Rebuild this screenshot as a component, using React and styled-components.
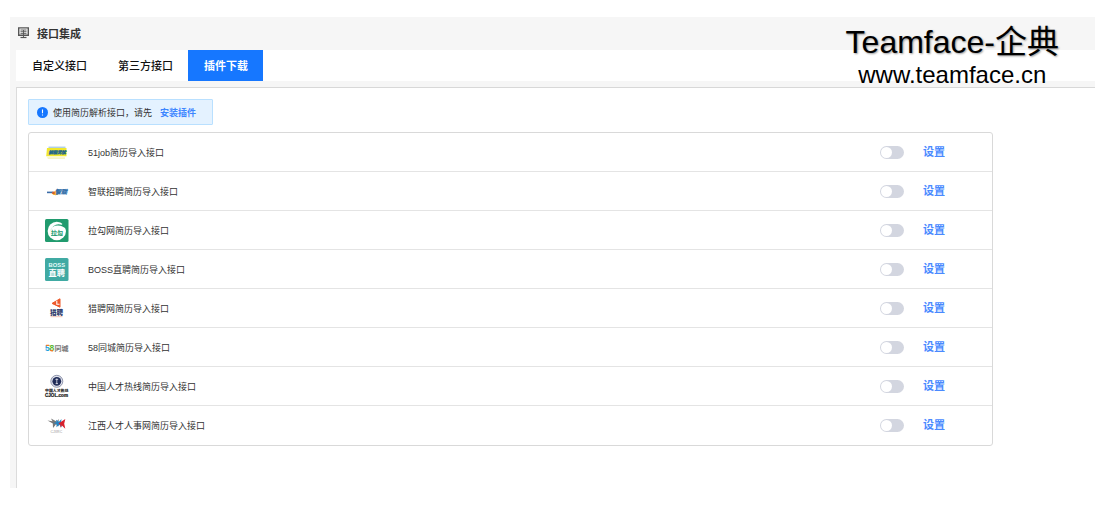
import React from 'react'
import styled, { createGlobalStyle } from 'styled-components'

const GlobalStyle = createGlobalStyle`
  * {
    box-sizing: border-box;
  }
  body {
    background-color: #fff;
    color: #333;
    font-family: "Liberation Sans", "Noto Sans CJK SC", sans-serif;
    font-size: 9px;
    margin: 0;
  }
  button {
    background: none;
    border: 0;
    cursor: pointer;
    font-family: inherit;
    padding: 0;
  }
`

const Screen = styled.div`
  display: flex;
  min-height: 100vh;
  padding: 17px 16px 23px 10px;
`

const Page = styled.main`
  background-color: #f6f6f6;
  display: flex;
  flex: 1;
  flex-direction: column;
  padding-left: 6px;
  position: relative;
`

const Header = styled.header`
  align-items: center;
  display: flex;
  gap: 8px;
  height: 33px;
  padding: 0 0 2px 2px;
  h1 {
    color: #333;
    font-size: 11px;
    font-weight: 700;
    margin: 0;
  }
`

const Tabs = styled.nav`
  background-color: #fff;
  display: flex;
  height: 31px;
  margin-bottom: 6px;
`

const Tab = styled.button`
  && {
    background-color: ${props => props.$active ? '#1677ff' : 'transparent'};
    color: ${props => props.$active ? '#fff' : '#111'};
    font-size: 11px;
    font-weight: ${props => props.$active ? 700 : 500};
    padding: 0 15px 2px 16px;
  }
`

const Panel = styled.section`
  align-items: flex-start;
  background-color: #fff;
  border-left: 1px solid #dcdcdc;
  border-top: 1px solid #d8d8d8;
  display: flex;
  flex: 1;
  flex-direction: column;
  gap: 7px;
  padding: 11px 102px 42px 11px;
`

const Notice = styled.p`
  align-items: center;
  background-color: #e4f2ff;
  border: 1px solid #b9e0ff;
  border-radius: 1px;
  display: flex;
  gap: 5px;
  height: 26px;
  margin: 0;
  padding: 0 16px 0 8px;
  a {
    color: #3d86ff;
    font-weight: 700;
    margin-left: 3px;
    text-decoration: none;
  }
`

const List = styled.ul`
  align-self: stretch;
  border: 1px solid #d9d9d9;
  border-radius: 3px;
  list-style: none;
  margin: 0;
  padding: 0;
`

const Item = styled.li`
  align-items: center;
  border-bottom: 1px solid #e4e4e4;
  display: flex;
  height: 39px;
  padding: 0 47px 0 16px;
  &:last-child {
    border-bottom-color: transparent;
  }
  label {
    flex: 1;
    margin-left: 19px;
  }
`

const Switch = styled.input`
  appearance: none;
  background-color: #d3d6e0;
  border-radius: 7px;
  cursor: pointer;
  height: 13px;
  margin: 0 19px 0 0;
  padding: 1px;
  width: 24px;
  &::before {
    background-color: #fff;
    border-radius: 50%;
    content: "";
    display: block;
    height: 11px;
    width: 11px;
  }
  &:checked {
    background-color: #1677ff;
  }
  &:checked::before {
    margin-left: 11px;
  }
`

const SetButton = styled.button`
  && {
    color: #4a8aff;
    font-size: 11px;
    font-weight: 700;
    line-height: 16px;
  }
`

const Brand = styled.div`
  color: #000;
  position: absolute;
  right: 36px;
  text-align: center;
  top: 5px;
  strong {
    display: block;
    font-size: 32px;
    font-weight: normal;
    line-height: 40px;
    text-shadow: 1px 1px 2px rgba(0, 0, 0, .4);
  }
  span {
    display: block;
    font-size: 24px;
    line-height: 26px;
  }
`

const LogoSvg = styled.svg`
  display: block;
  flex: none;
  font-family: "Liberation Sans", "Noto Sans CJK SC", sans-serif;
  height: 24px;
  overflow: visible;
  width: 24px;
`

const Logo = ({ children }) => (
  <LogoSvg viewBox="0 0 24 24" aria-hidden="true">{children}</LogoSvg>
)

const MonitorIcon = () => (
  <svg width="11" height="12" viewBox="0 0 11 12" fill="none" stroke="#555" aria-hidden="true">
    <path d="M.7.9h9.6v7.4H.7z" strokeWidth="1.4" />
    <path d="M2.5 3h6M2.5 4.7h6M2.5 6.4h6M5.5 3v7" strokeWidth=".9" />
    <path d="M2.5 10.5h6" strokeWidth="1.2" />
  </svg>
)

const InfoIcon = () => (
  <svg width="11" height="11" viewBox="0 0 11 11" aria-hidden="true">
    <circle cx="5.5" cy="5.5" r="5.5" fill="#1677ff" />
    <path d="M5.5 2.5v3.8M5.5 7.5v1.1" stroke="#fff" strokeWidth="1.1" />
  </svg>
)

const JobLogo = () => (
  <Logo>
    <path d="M3.5 7.2h17" stroke="#8fbadb" strokeWidth="1" />
    <path d="M2 8h19.5v8.3H1.2z" fill="#f0e72c" />
    <text x="3.4" y="14.2" fontSize="4.4" fontWeight="900" fontStyle="italic" fill="#17618c" stroke="#17618c" strokeWidth=".3">前程无忧</text>
    <path d="M2 17.3h18v1.8H3z" fill="#eeea8c" opacity=".5" />
  </Logo>
)

const ZhaopinLogo = () => (
  <Logo>
    <path d="M2 13.4h6" stroke="#3c6ca8" strokeWidth="1.6" />
    <path d="M6.5 14.2q3.5 4 8 .4l-2-4z" fill="#f0bb1c" />
    <circle cx="8.5" cy="13.9" r="1.3" fill="#d65b31" />
    <text x="10" y="14.8" fontSize="6" fontWeight="900" fontStyle="italic" fill="#326fa9" stroke="#326fa9" strokeWidth=".3">智联</text>
    <path d="M13 15.5h7" stroke="#c3d6e9" strokeWidth=".8" />
  </Logo>
)

const LagouLogo = () => (
  <Logo>
    <rect y="1" width="23.5" height="23" rx="1.5" fill="#219b6e" />
    <circle cx="11.8" cy="13" r="9.2" fill="#fff" />
    <path d="M5.2 13.2Q6.8 7.2 13 7.4q5 .2 7.8 3.4l1-4.2-3.4-2.4-1.5 2.6Q8.6 4.4 5.2 13.2z" fill="#219b6e" />
    <path d="M6 17.5h11.8" stroke="#219b6e" strokeWidth=".6" />
    <text x="6" y="16.8" fontSize="6" fontWeight="700" fill="#219b6e">拉勾</text>
  </Logo>
)

const BossLogo = () => (
  <Logo>
    <rect y="1" width="23.5" height="23" rx="1.5" fill="#40aaa3" />
    <text x="3.6" y="10.3" fontSize="5.8" fontWeight="700" fill="#e4fbf8">BOSS</text>
    <text x="3.6" y="19.2" fontSize="8.2" fontWeight="700" fill="#fff">直聘</text>
  </Logo>
)

const LiepinLogo = () => (
  <Logo>
    <path d="M15 2.8v8.4L7 7.4z" fill="#ee5a2b" stroke="#ee5a2b" strokeLinejoin="round" />
    <path d="M11.8 4.8v3.4h2.7" stroke="#fff" strokeWidth="1.1" fill="none" />
    <text x="5" y="19.2" fontSize="6.6" fontWeight="900" fill="#31406e">猎聘</text>
    <path d="M5.5 20.7h12" stroke="#f2c5b5" strokeWidth="1" />
  </Logo>
)

const TongchengLogo = () => (
  <Logo>
    <text x="0" y="16" fontSize="8.5" fontWeight="700" fill="#1d9fde">5</text>
    <text x="4.4" y="16" fontSize="8.5" fontWeight="700" fill="#5bb832">8</text>
    <path d="M1 10.4h3.2M5.2 14.8q1 1.3 2.8.8" stroke="#ee7c28" strokeWidth="1.3" fill="none" />
    <text x="9.4" y="15.6" fontSize="7" fontWeight="700" fill="#777">同城</text>
  </Logo>
)

const CjolLogo = () => (
  <Logo>
    <circle cx="11.8" cy="7.3" r="6" fill="#dfe2ec" stroke="#777f9a" strokeWidth=".8" />
    <circle cx="11.8" cy="7.3" r="4.4" fill="#202c58" />
    <path d="M11.8 4.5v5.4M10.4 5.4h2.8M10.6 9.6h2.4" stroke="#dfe2ec" strokeWidth=".8" />
    <text x="0" y="18.4" fontSize="3.9" fontWeight="900" fill="#222">中国人才热线</text>
    <text x="0" y="23" fontSize="4.6" fontWeight="700" fill="#111" stroke="#111" strokeWidth=".2">CJOL.com</text>
  </Logo>
)

const JiangxiLogo = () => (
  <Logo>
    <path d="M2.5 7.5l5 .8L6 5.5l5.5 3L14 6l-1 4 1 3.5-3-2.3L8 15l-.2-4.5z" fill="#777" />
    <path d="M8 10l3.5-.8L11 6.7l3 2L16.5 6 16 10l.8 4.5-2.6-2.8-2.7 2.6.1-3.2z" fill="#2384c4" />
    <path d="M13.5 10.5L20.3 6l-1.1 4.7 1.1 5-3.4-3.2-1.7 2.2.2-3z" fill="#d8202d" />
    <text x="5.5" y="19.8" fontSize="3.5" fill="#999">CJXRC</text>
  </Logo>
)

const tabs = ['自定义接口', '第三方接口', '插件下载']

const plugins = [
  { id: 'job', name: '51job简历导入接口', Icon: JobLogo },
  { id: 'zhaopin', name: '智联招聘简历导入接口', Icon: ZhaopinLogo },
  { id: 'lagou', name: '拉勾网简历导入接口', Icon: LagouLogo },
  { id: 'boss', name: 'BOSS直聘简历导入接口', Icon: BossLogo },
  { id: 'liepin', name: '猎聘网简历导入接口', Icon: LiepinLogo },
  { id: 'tongcheng', name: '58同城简历导入接口', Icon: TongchengLogo },
  { id: 'cjol', name: '中国人才热线简历导入接口', Icon: CjolLogo },
  { id: 'jiangxi', name: '江西人才人事网简历导入接口', Icon: JiangxiLogo },
]

const PluginItem = ({ plugin }) => {
  const { id, name, Icon } = plugin
  return (
    <Item>
      <Icon />
      <label htmlFor={id}>{name}</label>
      <Switch id={id} type="checkbox" role="switch" />
      <SetButton type="button">设置</SetButton>
    </Item>
  )
}

export default function App() {
  const [active, setActive] = React.useState(2)
  return (
    <Screen>
      <GlobalStyle />
      <Page>
        <Header>
          <MonitorIcon />
          <h1>接口集成</h1>
        </Header>
        <Tabs>
          {tabs.map((tab, index) => (
            <Tab key={tab} type="button" $active={index === active} onClick={() => setActive(index)}>
              {tab}
            </Tab>
          ))}
        </Tabs>
        <Panel>
          <Notice>
            <InfoIcon />
            <span>使用简历解析接口，请先</span>
            <a href="#install">安装插件</a>
          </Notice>
          <List>
            {plugins.map(plugin => <PluginItem key={plugin.id} plugin={plugin} />)}
          </List>
        </Panel>
        <Brand>
          <strong>Teamface-企典</strong>
          <span>www.teamface.cn</span>
        </Brand>
      </Page>
    </Screen>
  )
}
